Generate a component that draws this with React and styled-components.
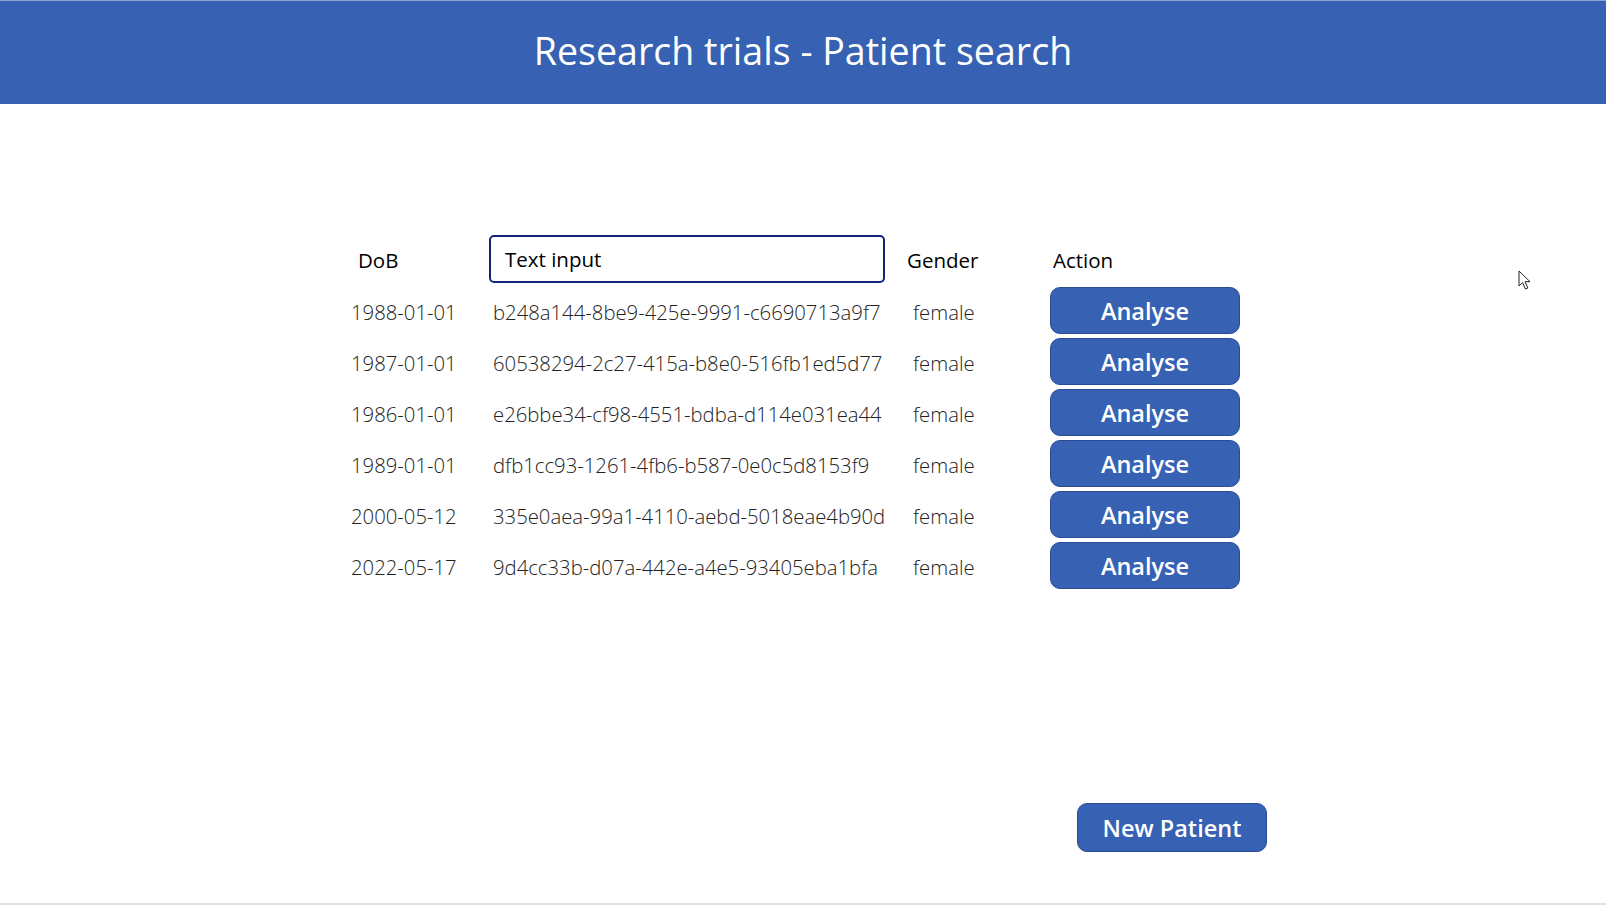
import React, { useState } from 'react'
import styled, { createGlobalStyle } from 'styled-components'

const patients = [
  { dob: '1988-01-01', id: 'b248a144-8be9-425e-9991-c6690713a9f7', gender: 'female' },
  { dob: '1987-01-01', id: '60538294-2c27-415a-b8e0-516fb1ed5d77', gender: 'female' },
  { dob: '1986-01-01', id: 'e26bbe34-cf98-4551-bdba-d114e031ea44', gender: 'female' },
  { dob: '1989-01-01', id: 'dfb1cc93-1261-4fb6-b587-0e0c5d8153f9', gender: 'female' },
  { dob: '2000-05-12', id: '335e0aea-99a1-4110-aebd-5018eae4b90d', gender: 'female' },
  { dob: '2022-05-17', id: '9d4cc33b-d07a-442e-a4e5-93405eba1bfa', gender: 'female' },
]

function App() {
  const [ query, setQuery ] = useState('')

  return (
    <>
      <GlobalStyle />
      <Page>
        <Header>
          <Title>Research trials - Patient search</Title>
        </Header>
        <Main>
          <Table>
            <HeadCell $indent={7}>DoB</HeadCell>
            <SearchInput
              value={query}
              placeholder="Text input"
              onChange={(e) => setQuery(e.target.value)}
            />
            <HeadCell $indent={22}>Gender</HeadCell>
            <HeadCell $indent={3}>Action</HeadCell>
            {patients.map((p) => (
              <React.Fragment key={p.id}>
                <Cell>{p.dob}</Cell>
                <Cell $indent={4}>{p.id}</Cell>
                <Cell $indent={28}>{p.gender}</Cell>
                <ActionButton>Analyse</ActionButton>
              </React.Fragment>
            ))}
          </Table>
          <Footer>
            <NewButton>New Patient</NewButton>
          </Footer>
        </Main>
        <Cursor width="16" height="22" viewBox="0 0 16 22">
          <path
            d="M1 1 L1 16 L4.6 12.6 L7.4 19 L9.8 18 L7.1 11.7 L12 11.7 Z"
            fill="#fff"
            stroke="#222"
            strokeWidth="1"
            strokeLinejoin="round"
          />
        </Cursor>
      </Page>
    </>
  )
}

const GlobalStyle = createGlobalStyle`
  * {
    box-sizing: border-box;
  }

  body {
    margin: 0;
    font-family: "Open Sans", "Noto Sans", sans-serif;
    background: #fff;
  }
`

const Page = styled.div`
  position: relative;
  height: 100vh;
  display: flex;
  flex-direction: column;
  border-bottom: 2px solid #e1e1e1;
  overflow: hidden;
`

const Header = styled.header`
  height: 104px;
  flex-shrink: 0;
  display: flex;
  align-items: center;
  justify-content: center;
  padding-bottom: 4px;
  background-color: #3761b2;
  border-top: 1px solid #8da3d3;
`

const Title = styled.h1`
  margin: 0;
  font-size: 37.6px;
  font-weight: 400;
  color: #fff;
`

const Main = styled.main`
  flex: 1;
  display: flex;
  flex-direction: column;
  padding-top: 131px;
`

const Table = styled.div`
  display: grid;
  grid-template-columns: 138px 396px 165px 190px;
  grid-template-rows: 48px;
  grid-auto-rows: 47px;
  row-gap: 4px;
  margin-left: 351px;
  align-items: center;
`

const HeadCell = styled.div`
  padding-left: ${(p) => p.$indent || 0}px;
  padding-top: 1px;
  font-size: 20.5px;
  color: #000;
`

const Cell = styled.div`
  padding-left: ${(p) => p.$indent || 0}px;
  padding-top: 2px;
  font-size: 20.3px;
  font-weight: 300;
  color: #222;
  white-space: nowrap;
`

const SearchInput = styled.input`
  height: 48px;
  width: 396px;
  padding: 0 14px;
  border: 2px solid #15237a;
  border-radius: 5px;
  font-family: inherit;
  font-size: 20.5px;
  color: #000;
  outline: none;

  &::placeholder {
    color: #000;
    opacity: 1;
  }
`

const ActionButton = styled.button`
  height: 47px;
  width: 190px;
  border: 1px solid #2a4c97;
  border-radius: 10px;
  background-color: #3761b2;
  color: #fff;
  font-family: inherit;
  font-size: 23.5px;
  font-weight: 600;
  cursor: pointer;
`

const Footer = styled.div`
  margin-top: auto;
  padding: 0 339px 51px 0;
  display: flex;
  justify-content: flex-end;
`

const NewButton = styled(ActionButton)`
  height: 49px;
`

const Cursor = styled.svg`
  position: absolute;
  left: 1518px;
  top: 270px;
`

export default App
